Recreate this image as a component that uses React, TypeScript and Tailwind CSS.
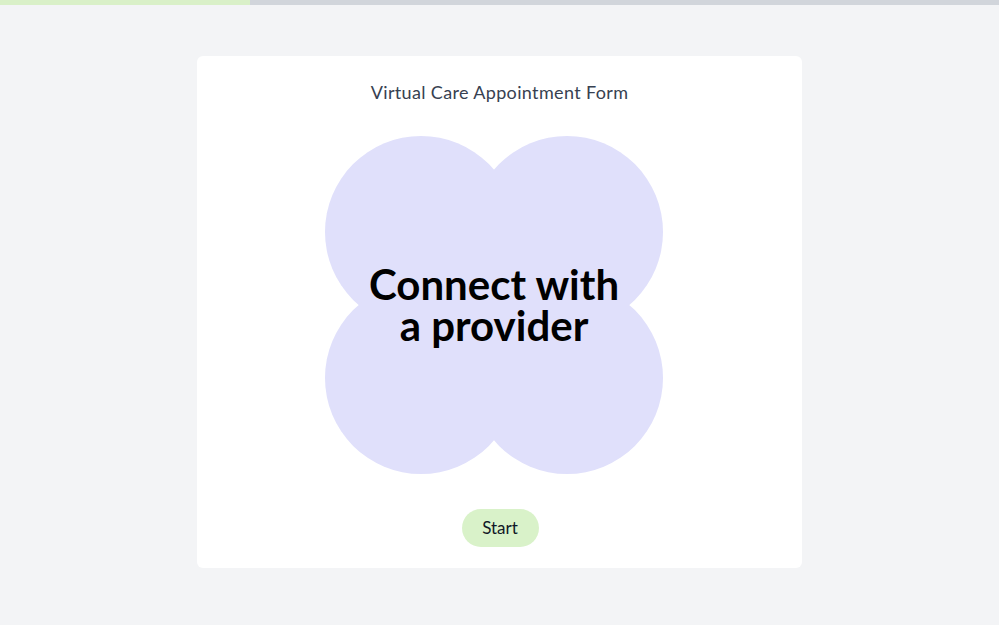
import React from "react";

export default function App() {
  return (
    <div
      className="min-h-[625px] w-full bg-[#f3f4f6]"
      style={{ fontFamily: "Lato, 'Noto Sans', sans-serif" }}
    >
      <div className="flex h-[5px] w-full bg-[#d1d5db]">
        <div className="h-full w-[25%] bg-[#d9f0c8]" />
      </div>
      <div className="flex justify-center pt-[51px]">
        <div className="flex h-[512px] w-[605px] flex-col items-center rounded-md bg-white pt-[24px] pb-[21px]">
          <h1 className="h-[24px] text-[18px] leading-[24px] tracking-[0.35px] text-[#374151]">
            Virtual Care Appointment Form
          </h1>
          <div className="relative mt-[32px] ml-[-11px] h-[338px] w-[338px]">
            <svg width="338" height="338" viewBox="0 0 338 338" className="block">
              <g fill="#e0e0fb">
                <circle cx="96" cy="96" r="96" />
                <circle cx="242" cy="96" r="96" />
                <circle cx="96" cy="242" r="96" />
                <circle cx="242" cy="242" r="96" />
                <rect x="96" y="96" width="146" height="146" />
              </g>
            </svg>
            <div className="absolute inset-0 flex items-center justify-center">
              <p className="text-center text-[42px] font-bold leading-[41px] text-black">
                Connect with
                <br />a provider
              </p>
            </div>
          </div>
          <button className="mt-[35px] ml-[1px] h-[38px] w-[77px] rounded-full bg-[#d9f2c9] text-[17px] text-[#111827]">
            Start
          </button>
        </div>
      </div>
    </div>
  );
}
